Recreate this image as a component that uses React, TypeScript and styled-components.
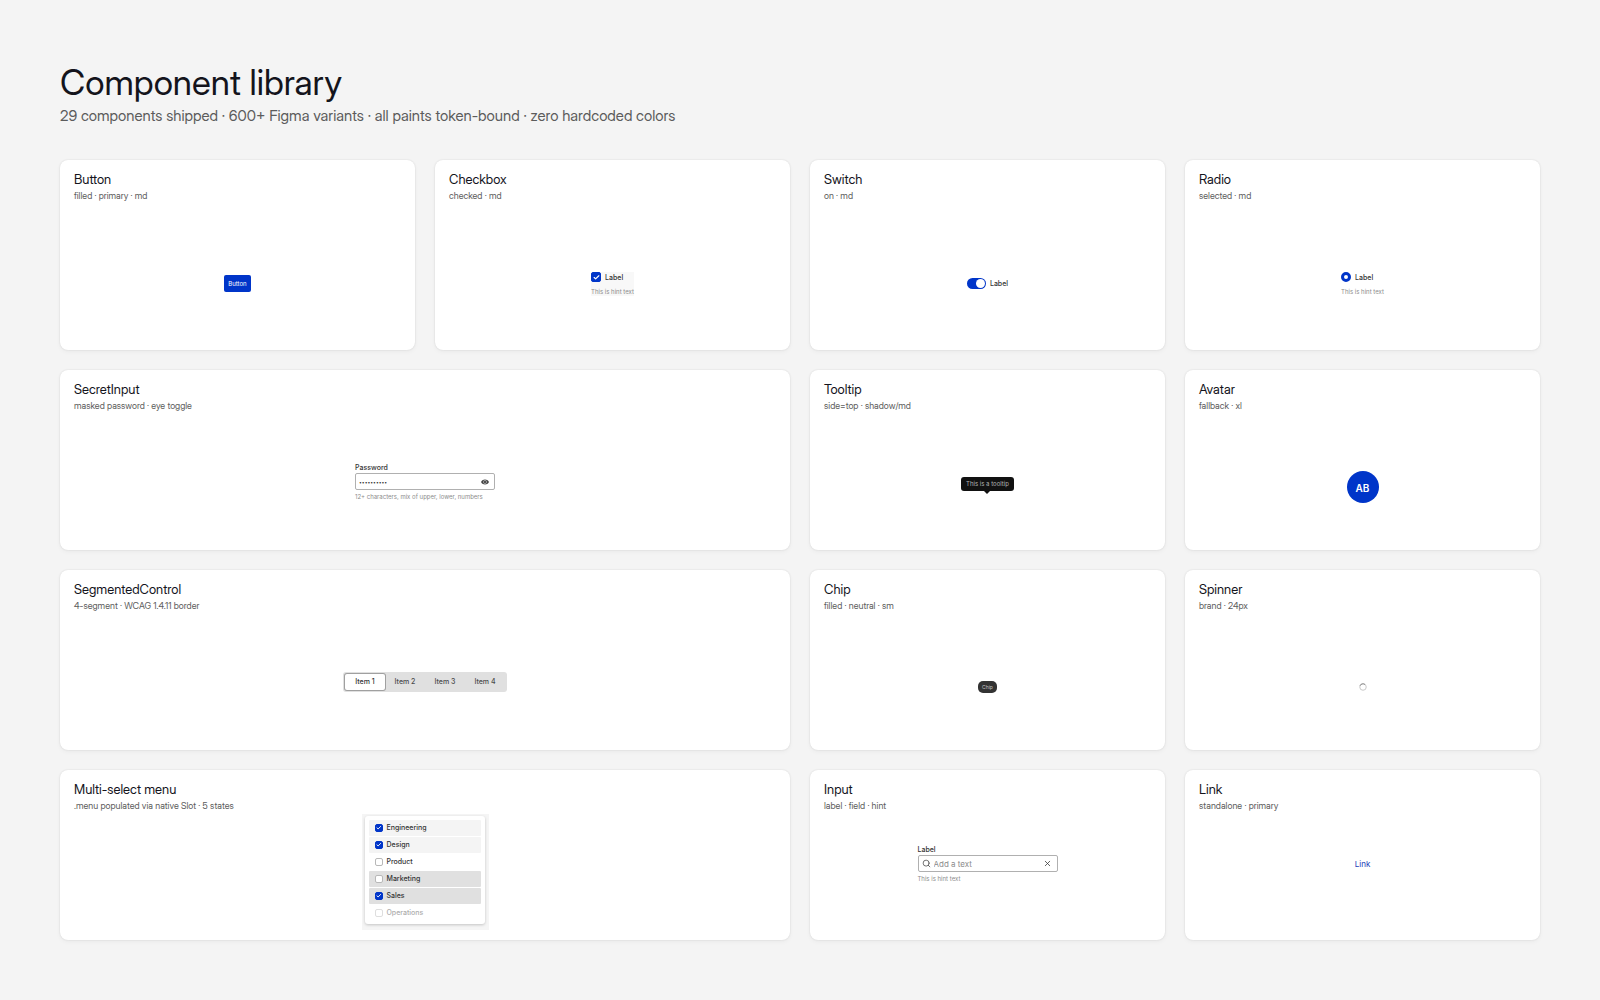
import React, { useState } from "react";
import styled, { createGlobalStyle, css } from "styled-components";
import { Check, Search, X } from "lucide-react";

const blue = "#0035c9";
const font = `Inter, "Liberation Sans", sans-serif`;
const displayFont = `"Inter Display", "Inter Tight", ${font}`;

const GlobalStyle = createGlobalStyle`
  *, *::before, *::after { box-sizing: border-box; }
  body { margin: 0; background: #f4f4f4; color: #14141c; font-family: ${font}; }
  button, input { font-family: inherit; }
  h1, h2, p { margin: 0; font-weight: 400; }
`;

const Page = styled.main`
  padding: 60px;
`;

const PageHeader = styled.header`
  padding-bottom: 34px;
`;

const PageTitle = styled.h1`
  font-family: ${displayFont};
  font-size: 35px;
  line-height: 45px;
`;

const PageLead = styled.p`
  font-family: ${displayFont};
  font-size: 15px;
  line-height: 21px;
  color: #5c5c5c;
`;

const Grid = styled.div`
  display: grid;
  grid-template-columns: repeat(4, minmax(0, 1fr));
  grid-template-rows: 190px 180px 180px 170px;
  gap: 20px;
`;

const CardBox = styled.section<{ $wide?: boolean }>`
  display: flex;
  flex-direction: column;
  grid-column: span ${(p) => (p.$wide ? 2 : 1)};
  padding: 10px 14px 0;
  background: #fff;
  border-radius: 8px;
  box-shadow: 0 0 2px rgba(0, 0, 0, 0.12), 0 2px 5px rgba(0, 0, 0, 0.04);
`;

const CardTitle = styled.h2`
  font-family: ${displayFont};
  font-size: 13px;
  line-height: 19px;
`;

const CardNote = styled.p`
  font-family: ${displayFont};
  font-size: 9px;
  line-height: 14px;
  color: #5c5c5c;
`;

const Stage = styled.div<{ $top?: number; $bottom?: number }>`
  flex: 1;
  min-height: 0;
  display: flex;
  align-items: center;
  justify-content: center;
  padding-top: ${(p) => p.$top ?? 0}px;
  padding-bottom: ${(p) => p.$bottom ?? 0}px;
`;

const PrimaryButton = styled.button`
  height: 17px;
  padding: 0 4px;
  border: 0;
  border-radius: 2px;
  background: ${blue};
  color: #fff;
  font-size: 6px;
  line-height: 17px;
`;

const Choice = styled.div<{ $shaded?: boolean }>`
  display: flex;
  flex-direction: column;
  gap: 5px;
  background: ${(p) => (p.$shaded ? "#f8f8f8" : "transparent")};
`;

const ChoiceLabel = styled.label`
  display: flex;
  align-items: center;
  gap: 4px;
  font-size: 7px;
  line-height: 11px;
  font-weight: 500;
  color: #333;
`;

const Hint = styled.p`
  font-size: 6px;
  line-height: 8px;
  color: #8c8c8c;
`;

const TickBox = styled.span<{ $size: number }>`
  display: grid;
  width: ${(p) => p.$size}px;
  height: ${(p) => p.$size}px;
  & > * { grid-area: 1 / 1; }
  svg {
    place-self: center;
    width: 70%;
    height: 70%;
    color: #fff;
    pointer-events: none;
  }
`;

const TickInput = styled.input`
  appearance: none;
  width: 100%;
  height: 100%;
  margin: 0;
  border: 1px solid #b8b8b8;
  border-radius: 2px;
  background: #fff;
  &:checked { background: ${blue}; border-color: ${blue}; }
  &:disabled { border-color: #dedede; }
`;

const SwitchInput = styled.input`
  appearance: none;
  display: flex;
  align-items: center;
  width: 19px;
  height: 11px;
  margin: 0;
  padding: 1px;
  border-radius: 6px;
  background: #9a9a9a;
  &::before {
    content: "";
    width: 9px;
    height: 9px;
    border-radius: 50%;
    background: #fff;
  }
  &:checked { background: ${blue}; justify-content: flex-end; }
`;

const RadioInput = styled.input`
  appearance: none;
  width: 10px;
  height: 10px;
  margin: 0;
  border: 1px solid #9a9a9a;
  border-radius: 50%;
  background: #fff;
  &:checked { border: 3px solid ${blue}; }
`;

const FieldGroup = styled.div`
  display: flex;
  flex-direction: column;
  width: 140px;
`;

const FieldLabel = styled.label`
  font-size: 7px;
  line-height: 11px;
  font-weight: 500;
  color: #333;
`;

const FieldBox = styled.div`
  display: flex;
  align-items: center;
  gap: 3px;
  height: 17px;
  margin-bottom: 3px;
  padding: 0 5px 0 3px;
  border: 1px solid #b0b0b0;
  border-radius: 2px;
  background: #fff;
`;

const FieldInput = styled.input<{ $secret?: boolean }>`
  flex: 1;
  min-width: 0;
  padding: 0;
  border: 0;
  outline: 0;
  background: none;
  color: #333;
  font-size: ${(p) => (p.$secret ? 5 : 8)}px;
  line-height: 12px;
  &::placeholder { color: #8c8c8c; opacity: 1; }
`;

const IconButton = styled.button`
  display: flex;
  padding: 0;
  border: 0;
  background: none;
  color: #333;
`;

const TooltipBubble = styled.div`
  position: relative;
  padding: 0 5px;
  border-radius: 3px;
  background: #111;
  color: #b4b4b4;
  font-size: 6px;
  line-height: 14px;
  &::after {
    content: "";
    position: absolute;
    top: 100%;
    left: 50%;
    margin-left: -3px;
    border: 3px solid transparent;
    border-top-color: #111;
    border-bottom: 0;
  }
`;

const AvatarCircle = styled.div`
  width: 32px;
  height: 32px;
  border-radius: 50%;
  background: ${blue};
  color: #fff;
  font-size: 10px;
  line-height: 34px;
  font-weight: 600;
  text-align: center;
`;

const Segments = styled.div`
  display: flex;
  padding: 2px;
  border-radius: 3px;
  background: #e0e0e0;
`;

const Segment = styled.button<{ $active?: boolean }>`
  width: 40px;
  height: 16px;
  padding: 0;
  border: 0;
  border-radius: 2px;
  background: none;
  color: #4c4c4c;
  font-size: 7px;
  line-height: 16px;
  font-weight: 500;
  ${(p) =>
    p.$active &&
    css`
      background: #fff;
      color: #333;
      box-shadow: 0 0 0 1px #a0a0a0;
    `}
`;

const ChipPill = styled.span`
  padding: 0 4px;
  border-radius: 5px;
  background: #333;
  color: #c4c4c4;
  font-size: 5px;
  line-height: 12px;
`;

const MenuFrame = styled.div`
  padding: 2px 4px 6px 3px;
  background: #f5f5f5;
`;

const MenuList = styled.div`
  display: flex;
  flex-direction: column;
  gap: 1px;
  width: 120px;
  padding: 4px 4px 3px;
  border-radius: 3px;
  background: #fff;
  box-shadow: 0 1px 3px rgba(0, 0, 0, 0.2);
`;

const MenuItem = styled.label<{ $bg?: string; $muted?: boolean }>`
  display: flex;
  align-items: center;
  gap: 4px;
  height: 16px;
  padding: 0 6px;
  border-radius: 1px;
  background: ${(p) => p.$bg ?? "transparent"};
  color: ${(p) => (p.$muted ? "#adadad" : "#333")};
  font-size: 7px;
  font-weight: 500;
`;

const TextLink = styled.a`
  color: #1a40b8;
  font-size: 8px;
  line-height: 12px;
  text-decoration: none;
`;

type CardProps = {
  title: string;
  note: string;
  wide?: boolean;
  top?: number;
  bottom?: number;
  children: React.ReactNode;
};

function Card({ title, note, wide, top, bottom, children }: CardProps) {
  return (
    <CardBox $wide={wide}>
      <CardTitle>{title}</CardTitle>
      <CardNote>{note}</CardNote>
      <Stage $top={top} $bottom={bottom}>{children}</Stage>
    </CardBox>
  );
}

type TickProps = {
  size: number;
  checked: boolean;
  disabled?: boolean;
  onChange: () => void;
};

function Tick({ size, checked, disabled, onChange }: TickProps) {
  return (
    <TickBox $size={size}>
      <TickInput type="checkbox" checked={checked} disabled={disabled} onChange={onChange} />
      {checked && <Check strokeWidth={4} />}
    </TickBox>
  );
}

function EyeIcon() {
  return (
    <svg width="8" height="8" viewBox="0 0 16 16" aria-hidden="true">
      <path d="M0 8C2 4.500 5 3 8 3s6 1.500 8 5c-2 3.500-5 5-8 5S2 11.500 0 8z" fill="#444" />
      <circle cx="8" cy="8" r="3.200" fill="none" stroke="#ccc" strokeWidth="1.200" />
    </svg>
  );
}

function SpinnerIcon() {
  return (
    <svg width="8" height="8" viewBox="0 0 16 16" role="img" aria-label="Loading">
      <circle cx="8" cy="8" r="6.500" fill="none" stroke="#c8c8c8" strokeWidth="2" />
      <path d="M2 5.500A6.500 6.500 0 0 1 12 3" fill="none" stroke="#8c8c8c" strokeWidth="2" />
    </svg>
  );
}

const options = [
  { name: "Engineering", bg: "#f4f4f4" },
  { name: "Design", bg: "#f4f4f4" },
  { name: "Product" },
  { name: "Marketing", bg: "#e0e0e0" },
  { name: "Sales", bg: "#e0e0e0" },
  { name: "Operations", disabled: true },
];

export default function App() {
  const [agreed, setAgreed] = useState(true);
  const [segment, setSegment] = useState(0);
  const [picked, setPicked] = useState(["Engineering", "Design", "Sales"]);
  const [reveal, setReveal] = useState(false);
  const [text, setText] = useState("");

  const toggle = (name: string) =>
    setPicked((all) => (all.includes(name) ? all.filter((n) => n !== name) : [...all, name]));

  return (
    <Page>
      <GlobalStyle />
      <PageHeader>
        <PageTitle>Component library</PageTitle>
        <PageLead>
          29 components shipped · 600+ Figma variants · all paints token-bound · zero hardcoded colors
        </PageLead>
      </PageHeader>
      <Grid>
        <Card title="Button" note="filled · primary · md" top={14}>
          <PrimaryButton type="button">Button</PrimaryButton>
        </Card>
        <Card title="Checkbox" note="checked · md" top={14}>
          <Choice $shaded>
            <ChoiceLabel>
              <Tick size={10} checked={agreed} onChange={() => setAgreed(!agreed)} />
              Label
            </ChoiceLabel>
            <Hint>This is hint text</Hint>
          </Choice>
        </Card>
        <Card title="Switch" note="on · md" top={14}>
          <ChoiceLabel>
            <SwitchInput type="checkbox" role="switch" defaultChecked />
            Label
          </ChoiceLabel>
        </Card>
        <Card title="Radio" note="selected · md" top={14}>
          <Choice>
            <ChoiceLabel>
              <RadioInput type="radio" name="choice" defaultChecked />
              Label
            </ChoiceLabel>
            <Hint>This is hint text</Hint>
          </Choice>
        </Card>

        <Card title="SecretInput" note="masked password · eye toggle" wide>
          <FieldGroup>
            <FieldLabel htmlFor="password">Password</FieldLabel>
            <FieldBox>
              <FieldInput
                id="password"
                $secret
                type={reveal ? "text" : "password"}
                defaultValue="Abcdef1234"
              />
              <IconButton type="button" aria-label="Show password" onClick={() => setReveal(!reveal)}>
                <EyeIcon />
              </IconButton>
            </FieldBox>
            <Hint>12+ characters, mix of upper, lower, numbers</Hint>
          </FieldGroup>
        </Card>
        <Card title="Tooltip" note="side=top · shadow/md" top={4}>
          <TooltipBubble role="tooltip">This is a tooltip</TooltipBubble>
        </Card>
        <Card title="Avatar" note="fallback · xl" top={11}>
          <AvatarCircle>AB</AvatarCircle>
        </Card>

        <Card title="SegmentedControl" note="4-segment · WCAG 1.4.11 border" wide>
          <Segments>
            {["Item 1", "Item 2", "Item 3", "Item 4"].map((name, i) => (
              <Segment
                key={name}
                type="button"
                aria-pressed={segment === i}
                $active={segment === i}
                onClick={() => setSegment(i)}
              >
                {name}
              </Segment>
            ))}
          </Segments>
        </Card>
        <Card title="Chip" note="filled · neutral · sm" top={11}>
          <ChipPill>Chip</ChipPill>
        </Card>
        <Card title="Spinner" note="brand · 24px" top={11}>
          <SpinnerIcon />
        </Card>

        <Card title="Multi-select menu" note=".menu populated via native Slot · 5 states" wide bottom={10}>
          <MenuFrame>
            <MenuList>
              {options.map((o) => (
                <MenuItem key={o.name} $bg={o.bg} $muted={o.disabled}>
                  <Tick
                    size={8}
                    checked={picked.includes(o.name)}
                    disabled={o.disabled}
                    onChange={() => toggle(o.name)}
                  />
                  {o.name}
                </MenuItem>
              ))}
            </MenuList>
          </MenuFrame>
        </Card>
        <Card title="Input" note="label · field · hint" bottom={26}>
          <FieldGroup>
            <FieldLabel htmlFor="text">Label</FieldLabel>
            <FieldBox>
              <Search size={9} color="#444" />
              <FieldInput
                id="text"
                placeholder="Add a text"
                value={text}
                onChange={(e) => setText(e.target.value)}
              />
              <IconButton type="button" aria-label="Clear" onClick={() => setText("")}>
                <X size={9} />
              </IconButton>
            </FieldBox>
            <Hint>This is hint text</Hint>
          </FieldGroup>
        </Card>
        <Card title="Link" note="standalone · primary" bottom={26}>
          <TextLink href="#link">Link</TextLink>
        </Card>
      </Grid>
    </Page>
  );
}
